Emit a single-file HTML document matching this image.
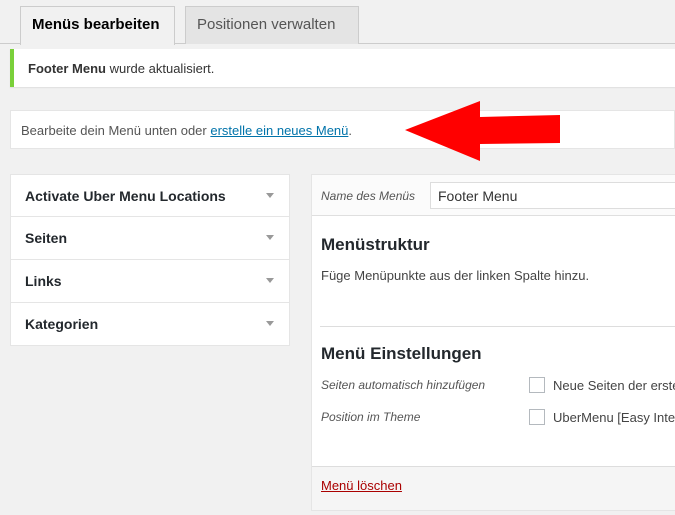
<!DOCTYPE html>
<html><head><meta charset="utf-8"><style>
*{box-sizing:border-box;margin:0;padding:0}
body{width:675px;height:515px;overflow:hidden;background:#f1f1f1;font-family:"Liberation Sans",sans-serif;color:#444;font-size:13px;position:relative}
.a{position:absolute}
.tab{position:absolute;top:6px;height:38px;border:1px solid #ccc;border-bottom:none;font-size:15px;line-height:36px;padding-left:11px;font-weight:bold}
.row{position:absolute;left:10px;width:280px;height:43px;background:#fff;border:1px solid #e5e5e5;border-top:none;font-size:14px;font-weight:bold;color:#23282d;padding:13px 0 0 14px}
.row:after{content:"";position:absolute;right:15px;top:18px;border:4px solid transparent;border-top:5px solid #999}
.cb{position:absolute;left:529px;width:16px;height:16px;border:1px solid #b4b9be;background:#fff}
i{font-style:italic;color:#555}
</style></head><body>
<div class="a" style="left:0;top:43px;width:675px;height:1px;background:#ccc"></div>
<div class="tab" style="left:20px;width:155px;background:#f1f1f1;height:39px;color:#000">Menüs bearbeiten</div>
<div class="tab" style="left:185px;width:174px;background:#e4e4e4;color:#555;font-weight:normal">Positionen verwalten</div>
<div class="a" style="left:10px;top:49px;width:665px;height:38px;background:#fff;border-left:4px solid #7ad03a;box-shadow:0 1px 1px rgba(0,0,0,.08);padding:12px 0 0 14px;color:#333"><b>Footer Menu</b> wurde aktualisiert.</div>
<div class="a" style="left:10px;top:110px;width:665px;height:39px;background:#fff;border:1px solid #e5e5e5;padding:12px 0 0 10px;color:#555">Bearbeite dein Menü unten oder <span style="color:#0073aa;text-decoration:underline">erstelle ein neues Menü</span>.</div>
<svg class="a" style="left:400px;top:98px" width="165" height="66"><polygon points="5,32 80,3 80,19 160,17 160,45 80,46 80,63" fill="#f00"/></svg>
<div class="a" style="left:10px;top:174px;width:280px;height:1px;background:#e5e5e5"></div>
<div class="row" style="top:174px;border-top:1px solid #e5e5e5">Activate Uber Menu Locations</div>
<div class="row" style="top:217px">Seiten</div>
<div class="row" style="top:260px">Links</div>
<div class="row" style="top:303px">Kategorien</div>
<div class="a" style="left:311px;top:174px;width:370px;height:337px;background:#fff;border:1px solid #e5e5e5"></div>
<div class="a" style="left:312px;top:175px;width:370px;height:41px;background:#fbfbfb;border-bottom:1px solid #dfdfdf"></div>
<i class="a" style="left:321px;top:189px;font-size:12px">Name des Menüs</i>
<div class="a" style="left:430px;top:182px;width:250px;height:27px;border:1px solid #ddd;background:#fff;font-size:14px;padding:5px 0 0 7px;color:#333">Footer Menu</div>
<div class="a" style="left:321px;top:235px;font-size:17px;font-weight:bold;color:#23282d">Menüstruktur</div>
<div class="a" style="left:321px;top:268px;color:#444">Füge Menüpunkte aus der linken Spalte hinzu.</div>
<div class="a" style="left:320px;top:326px;width:360px;height:1px;background:#ddd"></div>
<div class="a" style="left:321px;top:344px;font-size:17px;font-weight:bold;color:#23282d">Menü Einstellungen</div>
<i class="a" style="left:321px;top:378px;font-size:12px">Seiten automatisch hinzufügen</i>
<i class="a" style="left:321px;top:410px;font-size:12px">Position im Theme</i>
<div class="cb" style="top:377px"></div><div class="cb" style="top:409px"></div>
<div class="a" style="left:553px;top:378px;white-space:nowrap">Neue Seiten der erste</div>
<div class="a" style="left:553px;top:410px;white-space:nowrap">UberMenu [Easy Integ</div>
<div class="a" style="left:312px;top:466px;width:370px;height:44px;background:#f5f5f5;border-top:1px solid #ddd"></div>
<div class="a" style="left:321px;top:478px;color:#a00;text-decoration:underline">Menü löschen</div>
</body></html>
